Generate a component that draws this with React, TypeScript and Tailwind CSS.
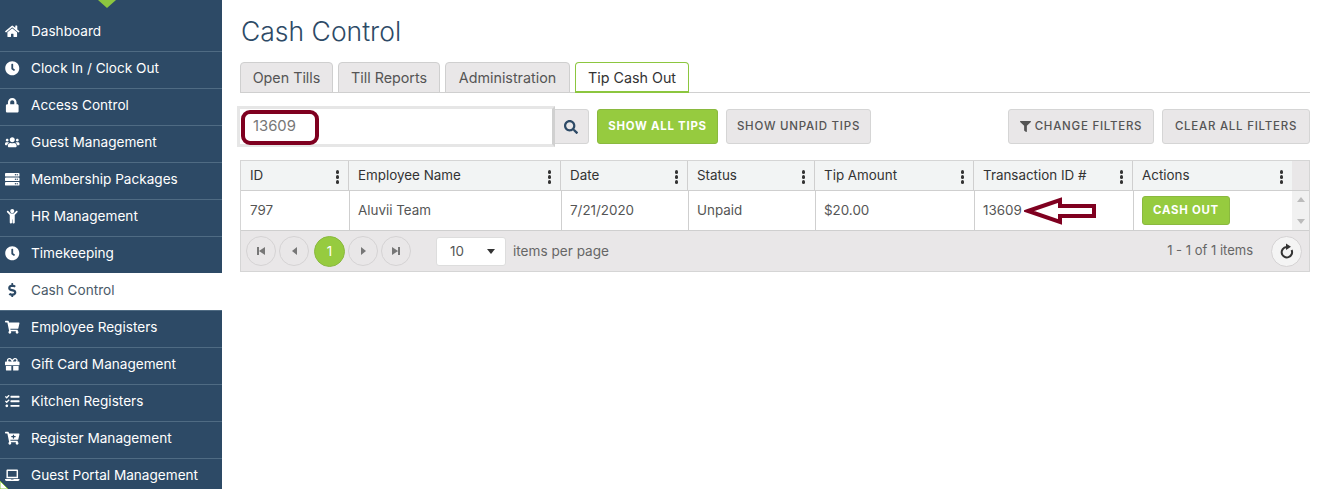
import {
  FaCartPlus,
  FaChild,
  FaClock,
  FaDollarSign,
  FaFilter,
  FaGift,
  FaHome,
  FaLaptop,
  FaLock,
  FaSearch,
  FaServer,
  FaShoppingCart,
  FaTasks,
  FaUsers,
} from "react-icons/fa";
import type { ComponentType, ReactNode } from "react";

const font = { fontFamily: "Inter, 'Liberation Sans', sans-serif" };

const menu: { label: string; icon: ComponentType<{ className?: string }>; active?: boolean }[] = [
  { label: "Dashboard", icon: FaHome },
  { label: "Clock In / Clock Out", icon: FaClock },
  { label: "Access Control", icon: FaLock },
  { label: "Guest Management", icon: FaUsers },
  { label: "Membership Packages", icon: FaServer },
  { label: "HR Management", icon: FaChild },
  { label: "Timekeeping", icon: FaClock },
  { label: "Cash Control", icon: FaDollarSign, active: true },
  { label: "Employee Registers", icon: FaShoppingCart },
  { label: "Gift Card Management", icon: FaGift },
  { label: "Kitchen Registers", icon: FaTasks },
  { label: "Register Management", icon: FaCartPlus },
  { label: "Guest Portal Management", icon: FaLaptop },
];

const tabs = [
  { label: "Open Tills", width: "w-[93px]" },
  { label: "Till Reports", width: "w-[102px]" },
  { label: "Administration", width: "w-[125px]" },
];

const columns = [
  { label: "ID", value: "797", width: "w-[108px]" },
  { label: "Employee Name", value: "Aluvii Team", width: "w-[212px]" },
  { label: "Date", value: "7/21/2020", width: "w-[127px]" },
  { label: "Status", value: "Unpaid", width: "w-[127px]" },
  { label: "Tip Amount", value: "$20.00", width: "w-[159px]" },
  { label: "Transaction ID #", value: "13609", width: "w-[159px]" },
];

function Dots() {
  return (
    <span className="ml-auto mr-[9px] mt-[3px] flex flex-col gap-[1.5px]">
      <i className="block size-[3.5px] rounded-full bg-[#333]" />
      <i className="block size-[3.5px] rounded-full bg-[#333]" />
      <i className="block size-[3.5px] rounded-full bg-[#333]" />
    </span>
  );
}

function GreyButton({ children, className }: { children: ReactNode; className: string }) {
  return (
    <button
      className={`flex h-[35px] items-center justify-center rounded-[3px] border border-[#d5d5d5] bg-[#e9e7e8] text-[11.5px] font-medium tracking-[0.75px] text-[#555] ${className}`}
    >
      {children}
    </button>
  );
}

function PageButton({ children }: { children: ReactNode }) {
  return (
    <span className="flex size-[30px] items-center justify-center rounded-full border border-[#d5d3d4] text-[#777]">
      {children}
    </span>
  );
}

export default function App() {
  return (
    <div className="relative flex h-[489px] w-[1327px] overflow-hidden bg-white" style={font}>
      <aside className="relative h-[489px] w-[222px] shrink-0 overflow-hidden bg-[#2d4a66] pt-[15px]">
        <div className="absolute left-[98px] top-0 h-0 w-0 border-x-[9px] border-t-[8px] border-x-transparent border-t-[#8cc63f]" />
        {menu.map((item) => (
          <div
            key={item.label}
            className={`flex items-center border-b border-[#4f6b83] text-[13.6px] ${
              item.active ? "-mt-px h-[38px] bg-white pb-[3px] text-[#4a5a68]" : "h-[37px] pb-[3px] text-white"
            }`}
          >
            <span className={`flex w-[31px] pl-[5px] ${item.active ? "text-[#2d4a66]" : "text-white"}`}>
              <item.icon className="text-[14.5px]" />
            </span>
            {item.label}
          </div>
        ))}
        <svg className="absolute bottom-0 left-0" width="9" height="9" viewBox="0 0 9 9">
          <path d="M0 1 L8 9 H0 Z" fill="#fff" stroke="#8cc63f" strokeWidth="1" />
        </svg>
      </aside>

      <main className="flex-1 pl-[18px] pr-[17px]">
        <h1 className="ml-px mt-[14px] h-[31px] text-[26.5px] font-light leading-[34px] text-[#2d4a66]">Cash Control</h1>

        <div className="mt-[17px] flex h-[31px] gap-[5px] border-b border-[#d0d0d0]">
          {tabs.map((tab) => (
            <span
              key={tab.label}
              className={`flex h-[31px] items-center justify-center rounded-t-[4px] border border-[#cfcfcf] bg-[#e9e7e8] text-[14.3px] text-[#555] ${tab.width}`}
            >
              {tab.label}
            </span>
          ))}
          <span className="flex h-[31px] w-[114px] items-center justify-center rounded-t-[4px] border border-b-2 border-[#8cc63f] bg-white pt-px text-[14.3px] text-[#333]">
            Tip Cash Out
          </span>
        </div>

        <div className="mt-[13px] flex h-[41px] items-center">
          <div className="relative z-10 -ml-[3px] flex h-[41px] w-[318px] shrink-0 items-center border-[3px] border-[#e6e6e6] border-r-[#d0d0d0] bg-white pl-[13px] text-[14.8px] text-[#777]">
            13609
            <div className="absolute left-[1px] top-[1px] h-[35px] w-[78px] rounded-[9px] border-4 border-[#7f0020]" />
          </div>
          <span className="-ml-[2px] flex h-[35px] w-[36px] items-center justify-center rounded-r-[3px] border border-[#d5d5d5] bg-[#e9e7e8] text-[#2d4a66]">
            <FaSearch className="text-[14px]" />
          </span>
          <button className="ml-[8px] h-[35px] w-[121px] rounded-[3px] border border-[#8ab93f] bg-[#96cb3f] text-[11.4px] font-bold tracking-[0.75px] text-white">
            SHOW ALL TIPS
          </button>
          <GreyButton className="ml-[8px] w-[145px]">SHOW UNPAID TIPS</GreyButton>
          <GreyButton className="ml-auto w-[146px] gap-[4px]">
            <FaFilter className="text-[11px]" /> CHANGE FILTERS
          </GreyButton>
          <GreyButton className="ml-[8px] w-[148px]">CLEAR ALL FILTERS</GreyButton>
        </div>

        <div className="mt-[13px] border border-[#d5d5d5] text-[13.4px]">
          <div className="flex h-[30px] border-b border-[#cfcfcf] bg-[#f2f4f4]">
            {columns.map((col) => (
              <div
                key={col.label}
                className={`flex items-center border-r border-[#cfcfcf] pl-[9px] text-[#333] ${col.width}`}
              >
                {col.label}
                <Dots />
              </div>
            ))}
            <div className="flex w-[159px] items-center pl-[9px] text-[#333]">
              Actions
              <Dots />
            </div>
            <div className="flex-1 bg-[#e9e7e8]" />
          </div>

          <div className="flex h-[39px] text-[#555]">
            <div className="w-px" />
            {columns.map((col) => (
              <div key={col.label} className={`flex items-center border-r border-[#cfcfcf] pl-[8px] ${col.width}`}>
                {col.value}
              </div>
            ))}
            <div className="flex w-[158px] items-center pl-[8px]">
              <button className="h-[29px] w-[88px] rounded-[3px] border border-[#8ab93f] bg-[#96cb3f] text-[11.4px] font-bold tracking-[0.75px] text-white">
                CASH OUT
              </button>
            </div>
            <div className="flex flex-1 flex-col items-center justify-between bg-[#f1f1f1] py-[6px]">
              <i className="h-0 w-0 border-x-[4px] border-b-[5px] border-x-transparent border-b-[#bbb]" />
              <i className="h-0 w-0 border-x-[4px] border-t-[5px] border-x-transparent border-t-[#bbb]" />
            </div>
          </div>

          <div className="flex h-[41px] items-center border-t border-[#cfcfcf] bg-[#e9e7e8] pl-[5px] pr-[7px] text-[#666]">
            <div className="flex items-center gap-[3px]">
              <PageButton>
                <svg width="8" height="8" viewBox="0 0 8 8" fill="currentColor"><path d="M0 0h2v8H0zM8 0v8L2 4z" /></svg>
              </PageButton>
              <PageButton>
                <svg width="5" height="8" viewBox="0 0 5 8" fill="currentColor"><path d="M5 0v8L0 4z" /></svg>
              </PageButton>
              <span className="ml-[2px] flex size-[31px] items-center justify-center rounded-full border border-[#8ab93f] bg-[#96cb3f] text-white">1</span>
              <PageButton>
                <svg width="5" height="8" viewBox="0 0 5 8" fill="currentColor"><path d="M0 0v8l5-4z" /></svg>
              </PageButton>
              <PageButton>
                <svg width="8" height="8" viewBox="0 0 8 8" fill="currentColor"><path d="M0 0v8l6-4zM6 0h2v8H6z" /></svg>
              </PageButton>
            </div>
            <div className="ml-[25px] flex h-[29px] w-[70px] items-center justify-between rounded-[3px] border border-[#ddd] bg-white pl-[13px] pr-[10px] text-[#555]">
              10
              <i className="h-0 w-0 border-x-[4px] border-t-[5px] border-x-transparent border-t-[#333]" />
            </div>
            <span className="ml-[7px] text-[13.6px]">items per page</span>
            <span className="ml-auto text-[13px]">1 - 1 of 1 items</span>
            <span className="ml-[18px] flex size-[31px] items-center justify-center rounded-full border border-[#d5d3d4] bg-[#f4f4f4] text-[#333]">
              <svg width="14" height="16" viewBox="0 0 14 16" fill="none">
                <path d="M6.5 4 A5.2 5.2 0 1 0 11.6 7" stroke="currentColor" strokeWidth="2" />
                <path d="M6 0.5 L11 3.8 L6 7 Z" fill="currentColor" />
              </svg>
            </span>
          </div>
        </div>
      </main>

      {/* annotation arrow drawn over the table */}
      <svg className="absolute left-[1024px] top-[196px]" width="74" height="30" viewBox="0 0 74 30" fill="none">
        <path d="M4 15 L36 4 V10 L70 10 V20 H36 V26 Z" stroke="#7f0020" strokeWidth="4" fill="white" />
      </svg>
    </div>
  );
}
